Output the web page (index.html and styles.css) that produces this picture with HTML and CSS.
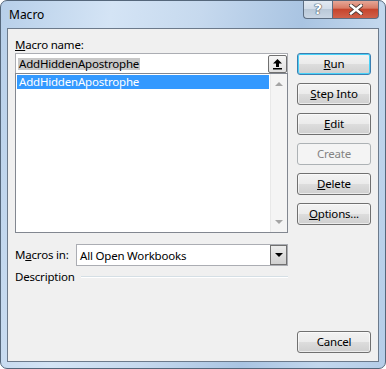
FILE: index.html
```html
<!DOCTYPE html>
<html lang="en">
<head>
    <meta charset="UTF-8">
    <title>Macro</title>
    <link rel="stylesheet" href="styles.css">
</head>
<body>

    <div class="window">
        <div class="titlebar">
            <span class="title">Macro</span>
            <div class="caption-buttons">
                <div class="cap help">?</div>
                <div class="cap close">
                    <svg width="14" height="11" viewBox="0 0 14 11">
                        <path d="M2 1.5 L12 9.5 M12 1.5 L2 9.5" stroke="#4a3a36" stroke-width="4.2" stroke-linecap="square"/>
                        <path d="M2 1.5 L12 9.5 M12 1.5 L2 9.5" stroke="#ffffff" stroke-width="2.4" stroke-linecap="square"/>
                    </svg>
                </div>
            </div>
        </div>

        <div class="client">
            <div class="main">
                <div class="left">
                    <div class="label"><u>M</u>acro name:</div>
                    <div class="name-box">
                        <span class="name-text">AddHiddenApostrophe</span>
                        <div class="up-btn">
                            <svg width="11" height="12" viewBox="0 0 11 12">
                                <path d="M5.5 1 L10 5.5 L7 5.5 L7 9 L4 9 L4 5.5 L1 5.5 Z" fill="#000"/>
                                <rect x="1" y="10" width="9" height="1.5" fill="#000"/>
                            </svg>
                        </div>
                    </div>
                    <div class="listbox">
                        <div class="items">
                            <div class="item selected">AddHiddenApostrophe</div>
                        </div>
                        <div class="scrollbar">
                            <span class="arrow up"></span>
                            <span class="arrow down"></span>
                        </div>
                    </div>
                    <div class="macros-in">
                        <span class="label">M<u>a</u>cros in:</span>
                        <div class="select">
                            <span class="select-text">All Open Workbooks</span>
                            <div class="select-btn"><span class="tri"></span></div>
                        </div>
                    </div>
                    <div class="desc">
                        <span>Description</span>
                        <div class="rule"></div>
                    </div>
                </div>

                <div class="buttons">
                    <div class="btn default"><u>R</u>un</div>
                    <div class="btn"><u>S</u>tep Into</div>
                    <div class="btn"><u>E</u>dit</div>
                    <div class="btn disabled">Create</div>
                    <div class="btn"><u>D</u>elete</div>
                    <div class="btn"><u>O</u>ptions...</div>
                </div>
            </div>

            <div class="footer">
                <div class="btn">Cancel</div>
            </div>
        </div>
    </div>

</body>
</html>
```

FILE: styles.css
```css
body {
    margin: 0;
    background: #ffffff;
    font-family: 'Noto Sans', 'Open Sans', sans-serif;
    font-size: 11.5px;
    letter-spacing: -0.2px;
    color: #000;
}

.window {
    width: 386px;
    height: 369px;
    box-sizing: border-box;
    border: 1px solid #55677b;
    border-radius: 7px;
    background: linear-gradient(100deg, #b7cfe9 0%, #d4e4f5 25%, #c6d9ee 45%, #a9c4e2 68%, #c2d7ed 85%, #b5cde8 100%);
    padding: 0 6px 6px 6px;
    display: flex;
    flex-direction: column;
    overflow: hidden;
}

.titlebar {
    height: 27px;
    display: flex;
    justify-content: space-between;
    align-items: flex-start;
}

.title {
    margin-top: 5px;
    margin-left: 2px;
    font-size: 12px;
    letter-spacing: 0;
    line-height: 18px;
}

.caption-buttons {
    display: flex;
    margin-top: -1px;
}

.cap {
    height: 19px;
    box-sizing: border-box;
    border: 1px solid #5d6e82;
    border-top: none;
    display: flex;
    justify-content: center;
    align-items: center;
}

.help {
    width: 29px;
    border-radius: 0 0 0 4px;
    border-right: none;
    background: linear-gradient(#e4ebf3 0%, #d2dde9 50%, #b9c8d8 51%, #c9d6e4 100%);
    color: #fff;
    font-family: 'DejaVu Sans', sans-serif;
    font-weight: bold;
    font-size: 14px;
    text-shadow: 0 0 1px #3c4a5a, 0 0 1px #3c4a5a, 0 0 1px #3c4a5a;
}

.close {
    width: 47px;
    border-radius: 0 0 4px 0;
    background: linear-gradient(#e7ad9e 0%, #d97c66 45%, #c6452d 52%, #d0614a 100%);
}

.client {
    flex: 1;
    background: #f0f0f0;
    border: 1px solid #6c7a8b;
    display: flex;
    flex-direction: column;
    padding: 0 7px 8px 7px;
}

.main {
    display: flex;
    gap: 9px;
}

.left {
    width: 273px;
    display: flex;
    flex-direction: column;
}

.label {
    line-height: 16px;
}

.left > .label {
    margin-top: 8px;
}

.name-box {
    height: 20px;
    box-sizing: border-box;
    border: 1px solid #abadb3;
    border-bottom: none;
    background: #fff;
    display: flex;
    align-items: center;
    justify-content: space-between;
    padding-left: 2px;
}

.name-text {
    background: #c8c8c8;
    line-height: 12px;
    padding: 0 1px;
}

.up-btn {
    width: 19px;
    height: 18px;
    box-sizing: border-box;
    border: 1px solid #707070;
    border-radius: 2px;
    background: linear-gradient(#f6f6f6, #e0e0e0);
    display: flex;
    align-items: center;
    justify-content: center;
}

.listbox {
    height: 160px;
    box-sizing: border-box;
    border: 1px solid #828790;
    background: #fff;
    display: flex;
}

.items {
    flex: 1;
    padding: 1px;
}

.item {
    line-height: 14px;
    padding-left: 2px;
}

.selected {
    background: #3399ff;
    color: #fff;
}

.scrollbar {
    width: 17px;
    background: #f4f4f4;
    border-left: 1px solid #e8e8e8;
    display: flex;
    flex-direction: column;
    justify-content: space-between;
    align-items: center;
    padding: 8px 0;
    box-sizing: border-box;
}

.arrow {
    width: 0;
    height: 0;
    border-left: 4px solid transparent;
    border-right: 4px solid transparent;
}

.arrow.up {
    border-bottom: 4px solid #a5a5a5;
}

.arrow.down {
    border-top: 4px solid #a5a5a5;
}

.macros-in {
    display: flex;
    align-items: center;
    margin-top: 11px;
}

.macros-in .label {
    width: 61px;
}

.select {
    flex: 1;
    height: 22px;
    box-sizing: border-box;
    border: 1px solid #abadb3;
    background: #fff;
    display: flex;
    align-items: center;
    justify-content: space-between;
}

.select-text {
    padding-left: 3px;
}

.select-btn {
    width: 17px;
    height: 20px;
    box-sizing: border-box;
    border: 1px solid #707070;
    background: linear-gradient(#ececec, #d0d0d0);
    display: flex;
    align-items: center;
    justify-content: center;
}

.tri {
    width: 0;
    height: 0;
    border-left: 4px solid transparent;
    border-right: 4px solid transparent;
    border-top: 4px solid #000;
}

.desc {
    display: flex;
    align-items: center;
    gap: 6px;
    margin-top: 3px;
    line-height: 16px;
}

.rule {
    flex: 1;
    height: 1px;
    background: #d5dfe5;
    border-bottom: 1px solid #ffffff;
}

.buttons {
    width: 74px;
    display: flex;
    flex-direction: column;
    gap: 8px;
    margin-top: 24px;
}

.btn {
    height: 22px;
    box-sizing: border-box;
    border: 1px solid #707070;
    border-radius: 3px;
    background: linear-gradient(#f2f2f2 0%, #ebebeb 50%, #dddddd 51%, #cfcfcf 100%);
    box-shadow: inset 0 0 0 1px rgba(255, 255, 255, 0.6);
    text-align: center;
    line-height: 20px;
}

.btn.default {
    border-color: #3c7fb1;
    box-shadow: inset 0 0 0 1px #48d1f8;
}

.btn.disabled {
    border-color: #adb2b5;
    background: #f4f4f4;
    color: #838383;
    box-shadow: none;
}

.footer {
    margin-top: auto;
    display: flex;
    justify-content: flex-end;
}

.footer .btn {
    width: 74px;
}
```
